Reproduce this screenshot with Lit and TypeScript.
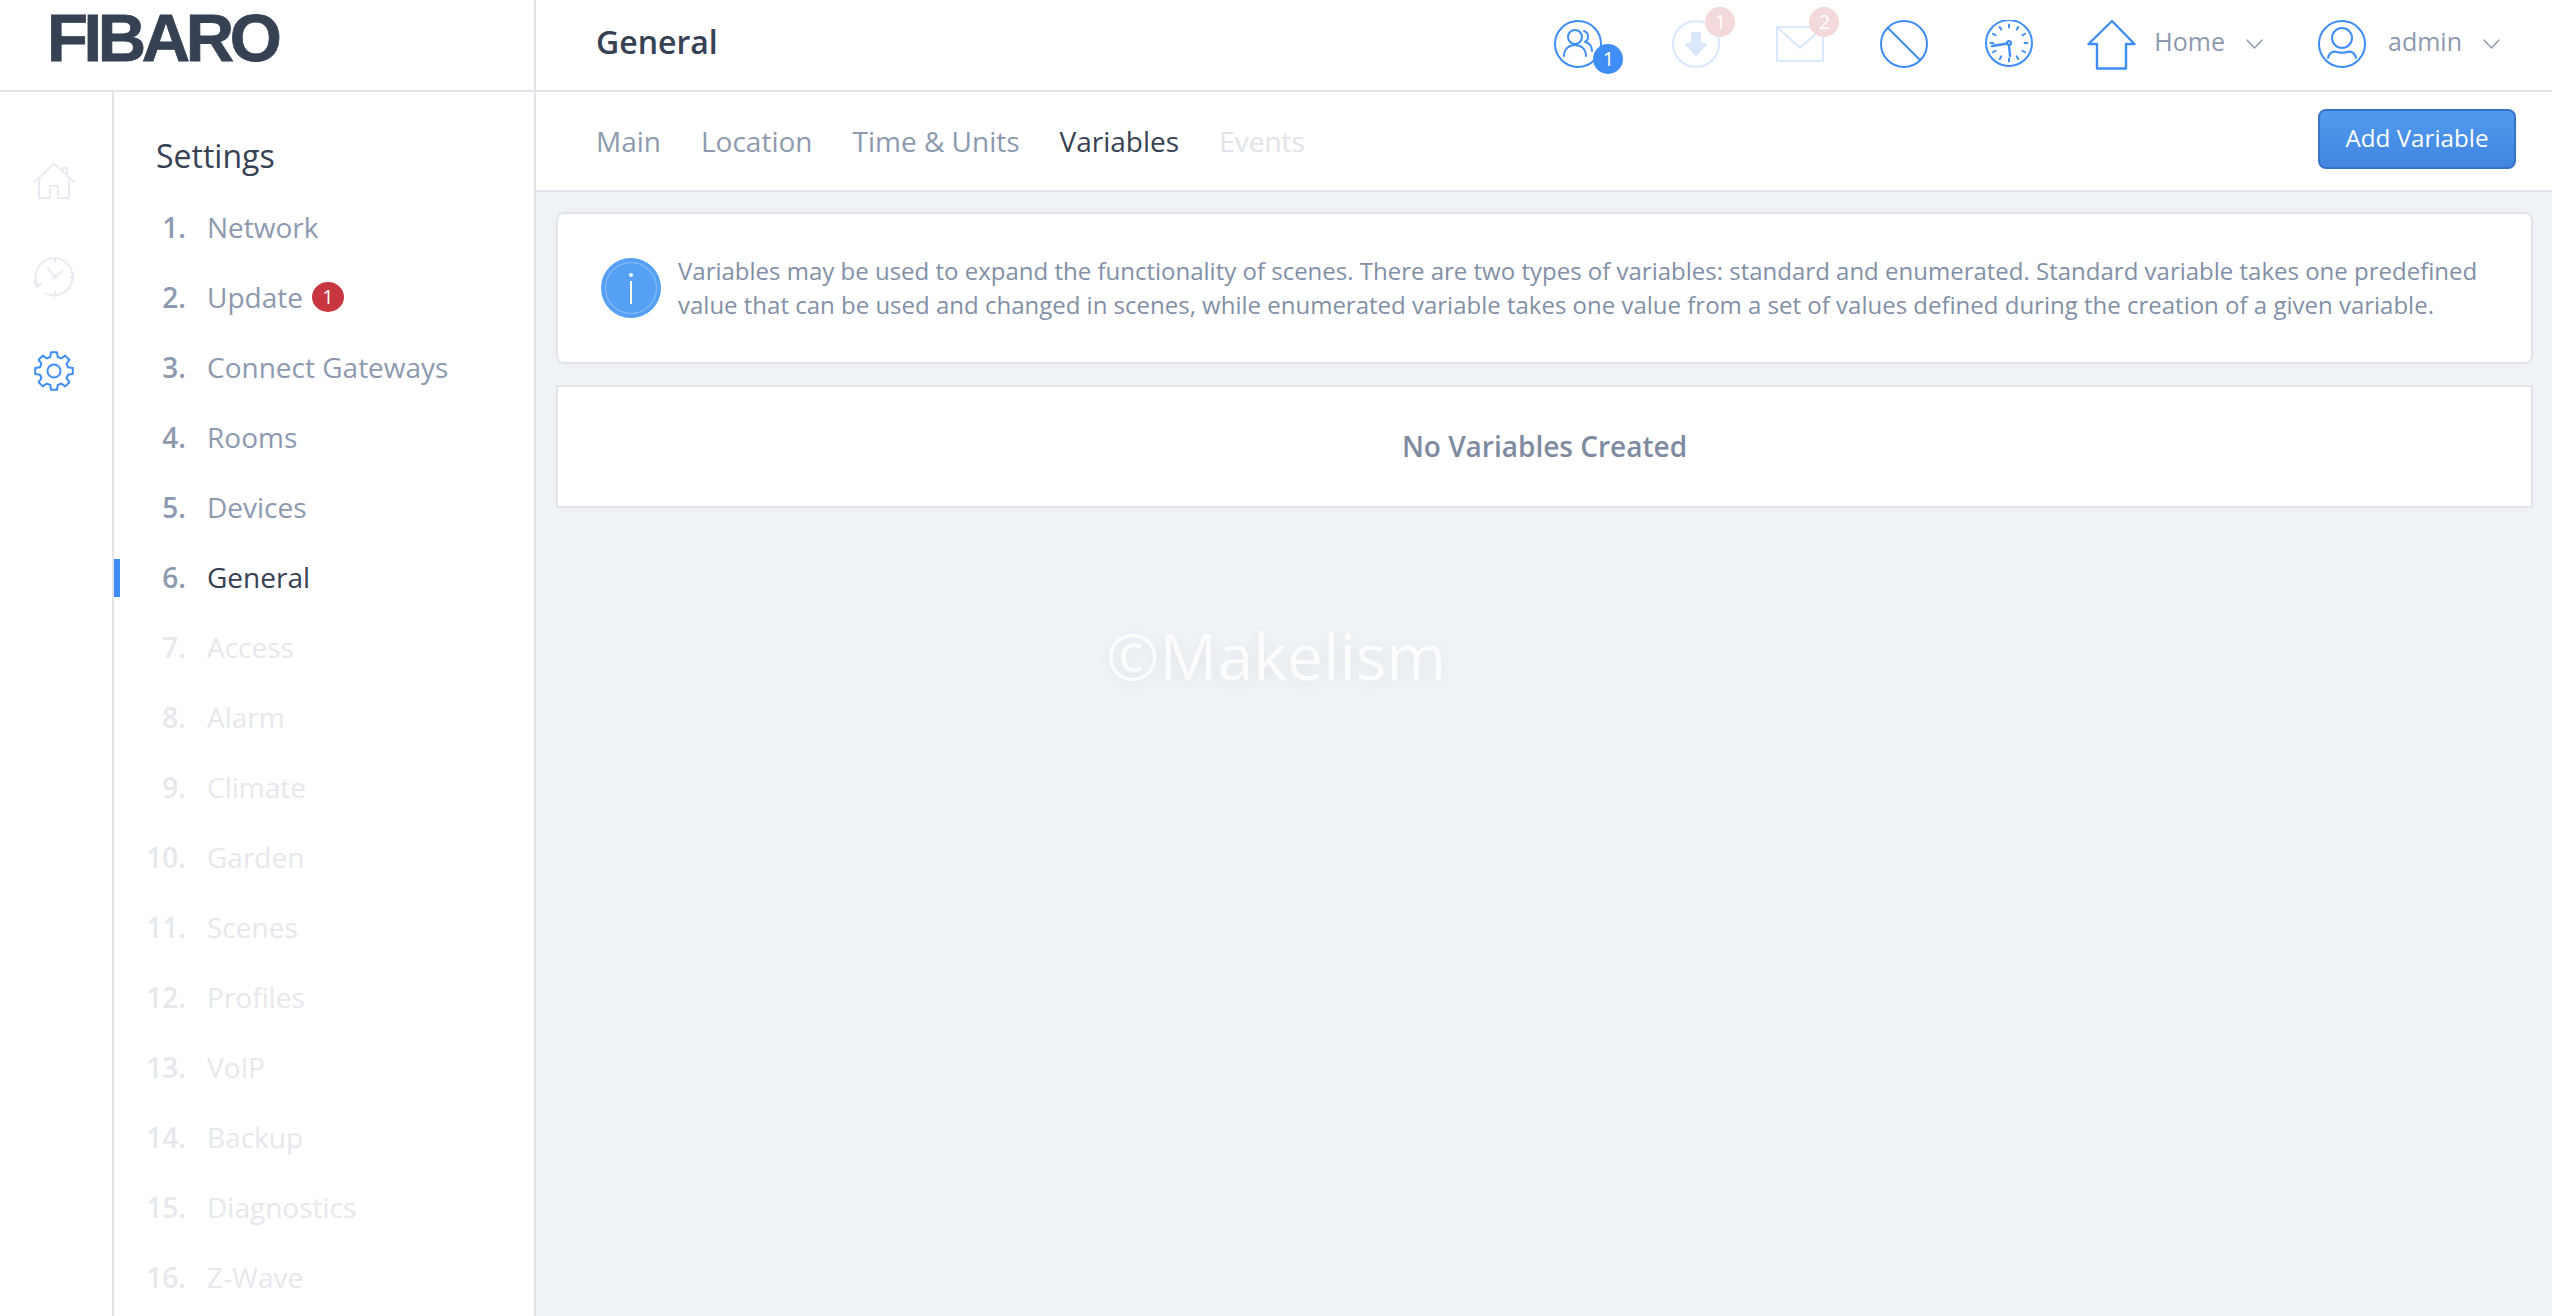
import { LitElement, html, css, svg } from "lit";
import { customElement } from "lit/decorators.js";

const MENU: [string, boolean][] = [
  ["Network", false], ["Update", false], ["Connect Gateways", false], ["Rooms", false], ["Devices", false],
  ["General", false], ["Access", true], ["Alarm", true], ["Climate", true], ["Garden", true], ["Scenes", true],
  ["Profiles", true], ["VoIP", true], ["Backup", true], ["Diagnostics", true], ["Z-Wave", true],
];

const clockTicks = [0, 30, 60, 90, 120, 150, 180, 210, 240, 270, 300, 330].map(
  (a) => svg`<line x1="24" y1="5.5" x2="24" y2="8.5" transform="rotate(${a} 24 24)" />`
);

function gearPath(): string {
  const pts: string[] = [];
  const pt = (r: number, deg: number) => {
    const a = (deg * Math.PI) / 180;
    return `${(20 + r * Math.sin(a)).toFixed(2)} ${(20 - r * Math.cos(a)).toFixed(2)}`;
  };
  for (let i = 0; i < 8; i++) {
    const c = i * 45;
    pts.push(pt(14.5, c - 15), pt(19, c - 9), pt(19, c + 9), pt(14.5, c + 15));
  }
  return "M" + pts.join("L") + "Z";
}

@customElement("app-root")
export class AppRoot extends LitElement {
  static styles = css`
    :host { display: block; width: 100%; height: 100vh; min-height: 1316px; overflow: hidden; position: relative;
      font-family: "Open Sans", "Liberation Sans", sans-serif; background: #f0f3f6; color: #8d99ae; }
    svg { display: block; flex: none; fill: none; stroke: #3f8ef7; stroke-width: 2; stroke-linecap: round; stroke-linejoin: round; }
    .top { display: flex; height: 90px; background: #fff; border-bottom: 2px solid #e2e4ea; }
    .brand { flex: none; border-right: 2px solid #e2e4ea; padding-left: 47px;
      font: 700 67px/76px "Liberation Sans", Arial, sans-serif; letter-spacing: -4.4px; color: #364153; box-sizing: border-box; width: 536px; -webkit-text-stroke: 0.8px #364153; }
    .page-title { padding-left: 60px; font-size: 32px; line-height: 84px; font-weight: 600; color: #364153; }
    .tools { margin-left: auto; display: flex; align-items: center; padding-right: 52px; padding-bottom: 2px; }
    .tool { position: relative; width: 48px; height: 48px; margin-left: 56px; }
    .tool.home { width: 50px; margin-left: 54px; margin-right: 17px; }
    .tool.dl { margin-left: 70px; }
    .tool.clock { margin-left: 57px; }
    .tool.user { margin-left: 55px; margin-right: 22px; }
    .badge { position: absolute; width: 30px; height: 30px; border-radius: 50%; color: #fff; font-size: 20px; line-height: 30px; text-align: center; }
    .badge.blue { background: #3f8ef7; left: 39px; top: 24px; }
    .badge.pink { background: #f3d9da; left: 33px; top: -13px; }
    .drop { font-size: 25px; line-height: 34px; color: #8d99ae; margin-top: -6px; }
    .chev { margin-left: 21px; stroke: #8d99ae; stroke-width: 1.4; }
    .body { display: flex; height: 1224px; }
    .rail { width: 114px; flex: none; background: #fff; border-right: 2px solid #e2e4ea; box-sizing: border-box; padding: 70px 0 0 33px; display: flex; flex-direction: column; gap: 57px; }
    .rail svg { stroke: #e8ecf2; }
    .rail svg.on { stroke: #3f8ef7; }
    .panel { width: 422px; flex: none; background: #fff; border-right: 2px solid #e2e4ea; box-sizing: border-box; }
    .panel h2 { margin: 45px 0 17px; padding-left: 42px; font-size: 32px; line-height: 38px; font-weight: 400; color: #364153; }
    .row { position: relative; display: flex; align-items: center; height: 70px; font-size: 28px; color: #8d99ae; }
    .row .n { width: 72px; text-align: right; font-weight: 600; margin-right: 21px; }
    .row.off { color: #e6e8ed; }
    .row.active { color: #364153; }
    .row.active .n { color: #8d99ae; }
    .row.active::before { content: ""; position: absolute; left: 0; top: 17px; width: 6px; height: 38px; background: #3f8ef7; }
    .count { margin-left: 9px; width: 32px; height: 30px; border-radius: 50%; background: #c8373f; color: #fff; font-size: 20px; line-height: 30px; text-align: center; }
    .main { flex: 1; min-width: 0; }
    .tabs { display: flex; align-items: center; height: 98px; background: #fff; border-bottom: 2px solid #e2e4ea; padding: 0 36px 0 60px; gap: 40px; font-size: 28px; }
    .tab.cur { color: #364153; }
    .tab.off { color: #e0e3e9; }
    .btn { margin-left: auto; width: 198px; height: 60px; box-sizing: border-box; border: 2px solid #3a72c9; border-radius: 8px; color: #fff; font-size: 24.2px; text-align: center; line-height: 54px; background: linear-gradient(#5199ef, #4186e0); margin-top: -4px; }
    .content { padding: 20px 19px 0 20px; display: flex; flex-direction: column; gap: 21px; }
    .card { background: #fff; border: 2px solid #e2e4ea; box-sizing: border-box; }
    .info { height: 152px; border-radius: 8px; display: flex; align-items: center; padding: 0 28px 0 43px; gap: 17px; font-size: 24px; line-height: 34.5px; color: #8290a6; }
    .info p { margin: 0; }
    .none { height: 123px; display: flex; align-items: center; justify-content: center; font-size: 28px; font-weight: 600; color: #7f8ba0; padding-bottom: 2px; }
    .mark { position: absolute; left: 1106px; top: 610px; font-size: 64.4px; line-height: 90px; color: rgba(255, 255, 255, 0.8); text-shadow: 0 3px 14px rgba(120, 130, 150, 0.14); }
  `;

  render() {
    return html`
      <div class="top">
        <div class="brand">FIBARO</div>
        <div class="page-title">General</div>
        <div class="tools">
          <div class="tool">
            <svg width="48" height="48" viewBox="0 0 48 48"><circle cx="24" cy="24" r="23" /><circle cx="21" cy="17" r="7" /><path d="M10 36c0-7 5-11 11-11s11 4 11 11" /><path d="M30 11a6 6 0 0 1 1 11c4 1 7 4 7 9" /></svg>
            <span class="badge blue">1</span>
          </div>
          <div class="tool dl">
            <svg width="48" height="48" viewBox="0 0 48 48" style="stroke:#d9e8fc"><circle cx="24" cy="24" r="23" /><path d="M20 13h8v11h6l-10 11-10-11h6z" fill="#d9e8fc" /></svg>
            <span class="badge pink">1</span>
          </div>
          <div class="tool">
            <svg width="48" height="48" viewBox="0 0 48 48" style="stroke:#d9e8fc"><rect x="1" y="7" width="46" height="34" /><path d="M1 7l23 21 23-21" /></svg>
            <span class="badge pink">2</span>
          </div>
          <div class="tool">
            <svg width="48" height="48" viewBox="0 0 48 48"><circle cx="24" cy="24" r="23" /><line x1="8" y1="8" x2="40" y2="40" /></svg>
          </div>
          <div class="tool clock">
            <svg width="48" height="48" viewBox="0 0 48 48"><circle cx="24" cy="23" r="23" /><g transform="translate(0 -1)">${clockTicks}</g><circle cx="24" cy="23" r="2" /><path d="M22.500 23.500L7 26M24 25l1 11" stroke-width="2.400" /></svg>
          </div>
          <div class="tool home">
            <svg width="50" height="50" viewBox="0 0 50 50"><path d="M25 1L1.500 24h8.500v24.500h29V24h8.500z" stroke-width="2.400" /></svg>
          </div>
          <span class="drop">Home</span>
          <svg class="chev" width="17" height="10" viewBox="0 0 17 10"><path d="M1 1l7.500 8L16 1" /></svg>
          <div class="tool user">
            <svg width="48" height="48" viewBox="0 0 48 48"><circle cx="24" cy="24" r="23" /><circle cx="24" cy="18" r="10" /><path d="M10 38c1-6 6-7 9-6 3 1 7 1 10 0 3-1 8 0 9 6" /></svg>
          </div>
          <span class="drop">admin</span>
          <svg class="chev" width="17" height="10" viewBox="0 0 17 10"><path d="M1 1l7.500 8L16 1" /></svg>
        </div>
      </div>
      <div class="body">
        <nav class="rail">
          <svg width="42" height="38" viewBox="0 0 42 38"><path d="M1.500 20L21 1.500 41 20M6 17v19h11V24h8v12h11V17M30 10V6h4v8" /></svg>
          <svg width="42" height="40" viewBox="0 0 42 40"><path d="M4 27A18.500 18.500 0 1 1 12 36M1 25l3 5 4-4" /><path d="M22 20l-7-9M22 20l7-6M22 1v4M22 35v4M37 20h4" /><circle cx="22" cy="20" r="1.500" /></svg>
          <svg class="on" width="40" height="40" viewBox="0 0 40 40" style="margin-top:-3px;margin-left:1px" stroke-width="2.200"><circle cx="20" cy="20" r="6.500" /><path d="${gearPath()}" /></svg>
        </nav>
        <aside class="panel">
          <h2>Settings</h2>
          ${MENU.map(([label, off], i) => html`
            <div class="row ${off ? "off" : ""} ${i === 5 ? "active" : ""}">
              <span class="n">${i + 1}.</span><span>${label}</span>
              ${i === 1 ? html`<span class="count">1</span>` : ""}
            </div>`)}
        </aside>
        <main class="main">
          <div class="tabs">
            <span class="tab">Main</span><span class="tab">Location</span><span class="tab">Time &amp; Units</span>
            <span class="tab cur">Variables</span><span class="tab off">Events</span>
            <div class="btn">Add Variable</div>
          </div>
          <div class="content">
            <div class="card info">
              <svg width="60" height="60" viewBox="0 0 60 60" style="stroke:none"><circle cx="30" cy="30" r="30" fill="#559ff4" /><circle cx="30" cy="30" r="25.500" stroke="#7fb6f6" stroke-width="1.500" /><circle cx="30" cy="17" r="2" fill="#fff" /><rect x="29" y="23" width="2" height="23" fill="#fff" /></svg>
              <p>Variables may be used to expand the functionality of scenes. There are two types of variables: standard and enumerated. Standard variable takes one predefined value that can be used and changed in scenes, while enumerated variable takes one value from a set of values defined during the creation of a given variable.</p>
            </div>
            <div class="card none">No Variables Created</div>
          </div>
        </main>
      </div>
      <div class="mark">©Makelism</div>
    `;
  }
}
